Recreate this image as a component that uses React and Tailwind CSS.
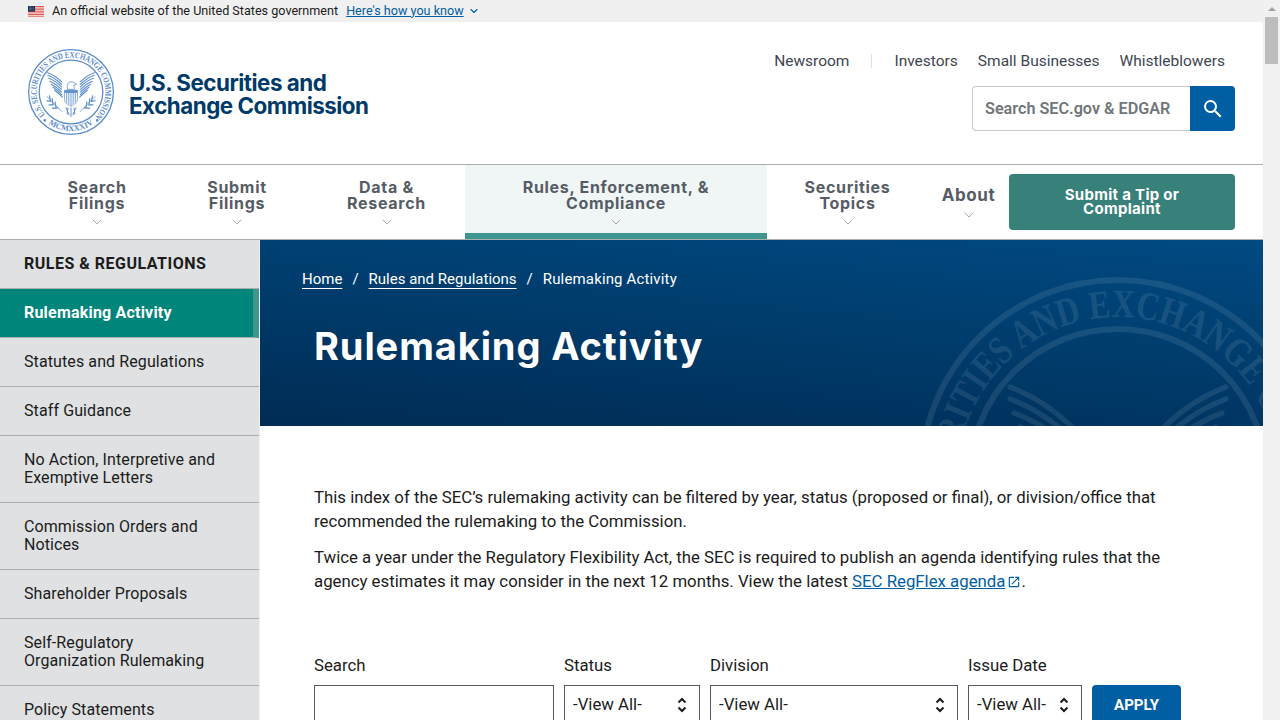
import React from 'react';
import { ChevronDown } from 'lucide-react';

const bodyFont = "font-['Roboto',sans-serif]";
const headFont = "font-['Inter',sans-serif]";

const sideItems = [
    { label: 'Rulemaking Activity', active: true },
    { label: 'Statutes and Regulations' },
    { label: 'Staff Guidance' },
    { label: 'No Action, Interpretive and Exemptive Letters' },
    { label: 'Commission Orders and Notices' },
    { label: 'Shareholder Proposals' },
    { label: 'Self-Regulatory Organization Rulemaking' },
    { label: 'Policy Statements' },
];

const navItems = [
    { label: 'Search Filings', width: 'w-[138px]', text: 'w-[70px]' },
    { label: 'Submit Filings', width: 'w-[142px]', text: 'w-[70px]' },
    { label: 'Data & Research', width: 'w-[157px]', text: 'w-[90px]' },
    { label: 'Rules, Enforcement, & Compliance', width: 'w-[302px]', text: 'w-[220px]', active: true },
    { label: 'Securities Topics', width: 'w-[161px]', text: 'w-[90px]' },
];

const Wing = () => (
    <g fill="none" stroke="currentColor" strokeLinecap="round" strokeWidth="2.6">
        <path d="M-54 -45 C-46 -42 -34 -36 -22 -24" />
        <path d="M-54 -39 C-46 -36 -34 -30 -22 -18" />
        <path d="M-52 -32 C-44 -29 -33 -24 -22 -12" />
        <path d="M-49 -25 C-42 -22 -32 -17 -22 -6" />
        <path d="M-46 -18 C-40 -15 -32 -10 -22 0" />
        <path d="M-42 -11 C-37 -8 -30 -3 -22 6" />
        <path d="M-38 -4 C-34 -1 -28 4 -20 12" />
    </g>
);

const Branch = () => (
    <g fill="none" stroke="currentColor" strokeWidth="1.8">
        <path d="M-56 10 L-21 46" />
        <path d="M-50 8 L-48 22 M-44 14 L-42 30 M-37 22 L-35 36 M-57 20 L-46 22 M-52 30 L-40 30 M-44 38 L-30 37" strokeWidth="2.6" />
    </g>
);

// the SEC seal, text stays real text on a circular path
const Seal = ({ id, className, bottomText = true }) => (
    <svg viewBox="-100 -100 200 200" className={className} aria-hidden="true">
        <defs>
            <path id={id} d="M -56.6 56.6 A 80 80 0 1 1 56.6 56.6" />
            <path id={`${id}-b`} d="M -68 60 A 91 91 0 0 0 68 60" />
        </defs>
        <circle r="98.5" fill="none" stroke="currentColor" strokeWidth="3" />
        <circle r="74" fill="none" stroke="currentColor" strokeWidth="3" />
        <text fill="currentColor" fontFamily="'Liberation Serif', serif" fontWeight="700" fontSize="20">
            <textPath href={`#${id}`} startOffset="5" textLength="372" lengthAdjust="spacingAndGlyphs">U.S. SECURITIES AND EXCHANGE COMMISSION</textPath>
        </text>
        {bottomText && (
            <text fill="currentColor" fontFamily="'Liberation Serif', serif" fontWeight="700" fontSize="19">
                <textPath href={`#${id}-b`} startOffset="50%" textAnchor="middle">MCMXXXIV</textPath>
            </text>
        )}
        <circle cx="-61" cy="66" r="3" fill="currentColor" />
        <circle cx="61" cy="66" r="3" fill="currentColor" />
        <Wing />
        <g transform="scale(-1 1)"><Wing /></g>
        <Branch />
        <g transform="scale(-1 1)"><Branch /></g>
        <path d="M-15 -4 H15 V18 C15 26 5 30 0 33 C-5 30 -15 26 -15 18 Z" fill="none" stroke="currentColor" strokeWidth="1.6" />
        <path d="M-15 -4 H15 V2 H-15 Z" fill="currentColor" />
        <path d="M-10 2 V24 M-5 2 V28 M0 2 V32 M5 2 V28 M10 2 V24" stroke="currentColor" strokeWidth="2" />
        <path d="M-8 -6 C-10 -16 -7 -24 0 -24 C5 -24 9 -21 13 -18 L6 -16 C8 -12 8 -8 8 -6 Z" fill="none" stroke="currentColor" strokeWidth="1.8" />
        <path d="M-12 36 L-4 54 M0 36 V58 M12 36 L4 54 M-7 36 L-9 52 M7 36 L9 52" stroke="currentColor" strokeWidth="2.2" />
    </svg>
);

const Flag = () => (
    <svg viewBox="0 0 16 11" className="w-4 h-[11px]" aria-hidden="true">
        <rect width="16" height="11" fill="#fff" />
        <path d="M0 .5H16M0 2.1H16M0 3.7H16M0 5.3H16M0 6.9H16M0 8.5H16M0 10.2H16" stroke="#d83933" strokeWidth="0.85" />
        <rect width="7" height="5.6" fill="#162e51" />
        <path d="M1 1H6M1 2.4H6M1 3.8H6" stroke="#fff" strokeWidth="0.5" strokeDasharray="0.6 .7" />
    </svg>
);

const Field = ({ label, width, children }) => (
    <div className={width}>
        <div className="text-[16.8px] leading-5 text-[#1b1b1b] mb-[10px]">{label}</div>
        {children}
    </div>
);

const SelectBox = () => (
    <div className="h-10 border border-[#565c65] flex items-center justify-between pl-2 pr-[12px] text-[16.8px] text-[#1b1b1b]">
        <span className="mb-[2px]">-View All-</span>
        <svg viewBox="0 0 10 16" className="w-[10px] h-4" fill="none" stroke="#1b1b1b" strokeWidth="2" aria-hidden="true">
            <path d="M1.5 5.5 5 2l3.5 3.5M1.5 10.5 5 14l3.5-3.5" />
        </svg>
    </div>
);

const App = () => {
    return (
        <div className={`${bodyFont} bg-white h-screen overflow-hidden flex text-[#1b1b1b]`}>
            <div className="flex-1 min-w-0">
                <div className="h-[22px] bg-[#f0f0f0] flex items-center pl-7 text-[12.6px] text-[#1b1b1b]">
                    <Flag />
                    <span className="ml-2">An official website of the United States government</span>
                    <a className="ml-2 text-[#005ea2] underline">Here's how you know</a>
                    <ChevronDown className="w-3 h-3 ml-1 text-[#005ea2]" strokeWidth={2.2} />
                </div>

                <header className="h-[143px] border-b border-[#a9aeb1] flex justify-between pl-7 pr-7">
                    <div className="flex items-center gap-[15px] pt-1 pb-[6px]">
                        <Seal id="logo-seal" className="w-[86px] h-[86px] text-[#5a8ccb]" />
                        <div className={`${headFont} pt-1 text-[22.4px] leading-[23px] font-bold tracking-[-0.5px] text-[#003a68]`}>
                            U.S. Securities and<br />Exchange Commission
                        </div>
                    </div>
                    <div className="flex flex-col items-end pt-[29px]">
                        <div className="flex items-center text-[15.5px] leading-5 text-[#3d4551] pr-[10px]">
                            <a>Newsroom</a>
                            <span className="w-px h-[14px] bg-[#d5e5e3] ml-[22px] mr-[22px]"></span>
                            <a>Investors</a>
                            <a className="ml-5">Small Businesses</a>
                            <a className="ml-5">Whistleblowers</a>
                        </div>
                        <div className="flex mt-[15px] h-[45px] w-[263px]">
                            <div className="flex-1 border border-[#c6cace] border-r-0 rounded-l flex items-center pl-3 pt-[2px] text-[16.2px] font-semibold text-[#71767a]">
                                Search SEC.gov &amp; EDGAR
                            </div>
                            <button className="w-[45px] bg-[#005ea2] rounded-r flex items-center justify-center">
                                <svg viewBox="0 0 24 24" className="w-6 h-6" fill="#fff" aria-hidden="true">
                                    <path d="M15.5 14h-.79l-.28-.27A6.471 6.471 0 0 0 16 9.5 6.5 6.5 0 1 0 9.5 16c1.61 0 3.09-.59 4.23-1.57l.27.28v.79l5 4.99L20.49 19l-4.99-5zm-6 0C7.01 14 5 11.99 5 9.5S7.01 5 9.5 5 14 7.01 14 9.5 11.99 14 9.5 14z" />
                                </svg>
                            </button>
                        </div>
                    </div>
                </header>

                <nav className={`${headFont} h-[75px] border-b border-[#a9aeb1] flex pl-7 pr-7`}>
                    {navItems.map(item => (
                        <div
                            key={item.label}
                            className={`${item.width} flex flex-col items-center pt-[14px] ${item.active ? 'bg-[#f0f5f5] border-b-[6px] border-[#3f9690]' : ''}`}
                        >
                            <div className={`${item.text} text-center text-[16px] leading-4 font-bold tracking-[0.7px] text-[#565c65]`}>{item.label}</div>
                            <ChevronDown className="w-4 h-4 mt-[3px] text-[#a9aeb1]" strokeWidth={1.5} />
                        </div>
                    ))}
                    <div className="w-[81px] flex flex-col items-center pt-[22px]">
                        <div className="text-[17px] leading-4 font-bold tracking-[0.6px] text-[#565c65]">About</div>
                        <ChevronDown className="w-4 h-4 mt-1 text-[#a9aeb1]" strokeWidth={1.5} />
                    </div>
                    <div className="flex-1 pt-[9px]">
                        <a className="h-14 bg-[#38807a] rounded flex items-center justify-center text-center text-white text-[15px] leading-[14px] font-bold tracking-[0.3px] px-12">
                            Submit a Tip or Complaint
                        </a>
                    </div>
                </nav>

                <div className="flex">
                    <aside className="w-[260px] shrink-0 bg-[#dfe1e2] border-r border-[#eef0f1] text-[16px] leading-[18px] tracking-[0.1px] text-[#1b1b1b]">
                        <div className="h-[49px] border-b border-[#a9aeb1] flex items-center pl-6 font-bold tracking-[0.5px] text-[#1b1b1b]">
                            RULES &amp; REGULATIONS
                        </div>
                        {sideItems.map(item => (
                            <div
                                key={item.label}
                                className={item.active
                                    ? 'border-r-[6px] border-b border-r-[#3f9690] border-b-[#a9aeb1] bg-[#00857a] text-white font-bold tracking-[0.2px] py-[15px] pl-6 pr-5 h-[49px]'
                                    : 'border-b border-[#a9aeb1] py-[15px] pl-6 pr-9'}
                            >
                                {item.label}
                            </div>
                        ))}
                    </aside>

                    <main className="flex-1 min-w-0">
                        <section className="relative h-[186px] overflow-hidden bg-[linear-gradient(185deg,#004a82_0%,#002c54_100%)] text-white">
                            <Seal id="hero-seal" className="absolute left-[658px] top-[37px] w-[400px] h-[400px] text-white opacity-[0.09]" bottomText={false} />
                            <div className="relative pl-[42px] pt-[29px] text-[15px] leading-5 flex gap-[10px]">
                                <a className="underline underline-offset-4">Home</a>
                                <span>/</span>
                                <a className="underline underline-offset-4">Rules and Regulations</a>
                                <span>/</span>
                                <span className="tracking-[0.15px]">Rulemaking Activity</span>
                            </div>
                            <h1 className={`${headFont} relative pl-[54px] mt-[34px] text-[38px] leading-[46px] font-bold tracking-[0.9px]`}>Rulemaking Activity</h1>
                        </section>

                        <div className="pl-[54px] pr-[82px] pt-[59px] text-[16.8px] leading-6">
                            <p>This index of the SEC’s rulemaking activity can be filtered by year, status (proposed or final), or division/office that recommended the rulemaking to the Commission.</p>
                            <p className="mt-3">
                                Twice a year under the Regulatory Flexibility Act, the SEC is required to publish an agenda identifying rules that the agency estimates it may consider in the next 12 months. View the latest{' '}
                                <a className="text-[#005ea2] underline">SEC RegFlex agenda</a>
                                <svg viewBox="0 0 24 24" className="inline w-[14px] h-[14px] ml-[2px] align-[-2px]" fill="#005ea2" aria-hidden="true">
                                    <path d="M19 19H5V5h7V3H5a2 2 0 0 0-2 2v14a2 2 0 0 0 2 2h14c1.1 0 2-.9 2-2v-7h-2v7zM14 3v2h3.59l-9.83 9.83 1.41 1.41L19 6.41V10h2V3h-7z" />
                                </svg>.
                            </p>

                            <div className="flex gap-[10px] mt-[62px] items-end">
                                <Field label="Search" width="w-[240px]">
                                    <div className="h-10 border border-[#565c65]"></div>
                                </Field>
                                <Field label="Status" width="w-[136px]"><SelectBox /></Field>
                                <Field label="Division" width="w-[248px]"><SelectBox /></Field>
                                <Field label="Issue Date" width="w-[114px]"><SelectBox /></Field>
                                <button className="w-[89px] h-10 bg-[#005ea2] rounded-t text-white font-bold text-[15px]">APPLY</button>
                            </div>
                        </div>
                    </main>
                </div>
            </div>

            {/* page scrollbar as in the screenshot */}
            <div className="w-[17px] shrink-0 bg-[#f1f1f1] px-[2px]">
                <div className="h-[17px] flex items-center justify-center">
                    <div className="border-x-[4px] border-b-[4px] border-x-transparent border-b-[#a3a3a3]"></div>
                </div>
                <div className="h-[47px] bg-[#bdbdbd]"></div>
            </div>
        </div>
    );
};

export default App;
